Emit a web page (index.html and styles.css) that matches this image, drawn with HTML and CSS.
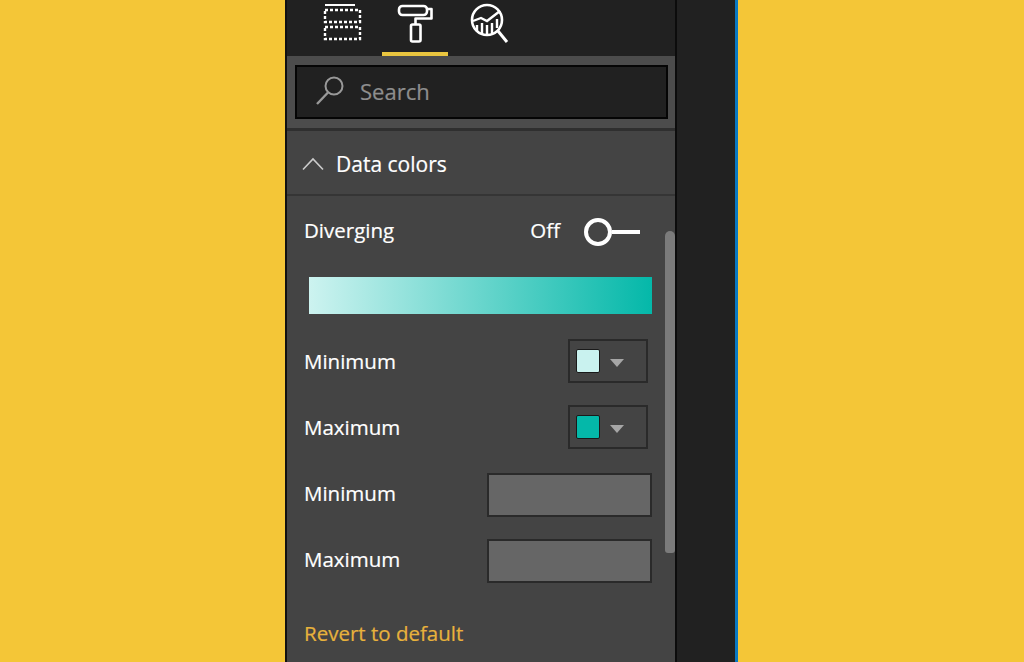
FILE: index.html
```html
<!DOCTYPE html>
<html lang="en">
<head>
<meta charset="utf-8">
<title>Data colors</title>
<link rel="stylesheet" href="styles.css">
</head>
<body>
<div class="pane">
  <div class="panel">
    <div class="tabs">
      <div class="tab tab-fields">
        <svg width="40" height="44" viewBox="0 0 40 44" fill="none" stroke="#fff">
          <path d="M2 7h30" stroke-width="2"/>
          <rect x="2" y="12" width="35" height="12" stroke-width="2.400" stroke-dasharray="3 2"/>
          <rect x="2" y="29" width="35" height="12" stroke-width="2.400" stroke-dasharray="3 2"/>
        </svg>
      </div>
      <div class="tab tab-format">
        <svg width="36" height="46" viewBox="0 0 36 46" fill="none" stroke="#fff" stroke-width="2.600" stroke-linejoin="round">
          <rect x="2" y="8" width="28" height="9" rx="3.500"/>
          <path d="M30 11h4.500v9.500H18.500v6"/>
          <rect x="14" y="26.500" width="9.500" height="17" rx="1.500"/>
        </svg>
      </div>
      <div class="tab tab-analytics">
        <svg width="40" height="46" viewBox="0 0 40 46" fill="none" stroke="#fff">
          <circle cx="17" cy="22" r="15" stroke-width="2.600"/>
          <path d="M28 33l9 11" stroke-width="3"/>
          <path d="M3 23l8-3 6 3 13-10" stroke-width="2.400"/>
          <path d="M7 27v6M12 25v11M17 27v9M22 25v10M27 21v9" stroke-width="2.400"/>
        </svg>
      </div>
    </div>
    <div class="search-band">
      <div class="search">
        <svg class="search-icon" width="30" height="32" viewBox="0 0 30 32" fill="none" stroke="#999">
          <circle cx="19" cy="11" r="8.500" stroke-width="2"/>
          <path d="M13 17.500L2 29" stroke-width="2.400"/>
        </svg>
        <span class="search-text">Search</span>
      </div>
    </div>
    <div class="card-head">
      <svg class="chevron" width="22" height="14" viewBox="0 0 22 14" fill="none" stroke="#ccc" stroke-width="1.600">
        <path d="M1 12.500L11 2l10 10.500"/>
      </svg>
      <span class="card-title">Data colors</span>
    </div>
    <div class="card-body">
      <div class="row row-toggle">
        <span class="label">Diverging</span>
        <div class="toggle">
          <span class="label">Off</span>
          <span class="switch"><span class="knob"></span><span class="stem"></span></span>
        </div>
      </div>
      <div class="gradient"></div>
      <div class="row row-color">
        <span class="label">Minimum</span>
        <div class="picker"><span class="swatch swatch-min"></span><span class="caret"></span></div>
      </div>
      <div class="row row-color">
        <span class="label">Maximum</span>
        <div class="picker"><span class="swatch swatch-max"></span><span class="caret"></span></div>
      </div>
      <div class="row row-input">
        <span class="label">Minimum</span>
        <div class="field"></div>
      </div>
      <div class="row row-input">
        <span class="label">Maximum</span>
        <div class="field"></div>
      </div>
      <div class="revert">Revert to default</div>
    </div>
    <div class="scrollbar"></div>
  </div>
  <div class="strip"></div>
</div>
</body>
</html>
```

FILE: styles.css
```css
* { box-sizing: border-box; }
html, body { margin: 0; height: 100%; overflow: hidden; }
body {
  background: #f4c637;
  font-family: "Open Sans", "Noto Sans", sans-serif;
  color: #fff;
  padding-left: 285px;
  -webkit-text-stroke: 0.2px currentColor;
}
.pane {
  display: flex;
  width: 453px;
  height: 662px;
}
.panel {
  position: relative;
  width: 392px;
  background: #444;
  border-left: 2px solid #111;
  border-right: 2px solid #0c0c0c;
  overflow: hidden;
}
.strip {
  width: 61px;
  background: #212121;
  border-right: 3px solid #0a78c2;
}
.tabs {
  display: flex;
  height: 56px;
  background: #212121;
  padding-left: 29px;
}
.tab {
  display: flex;
  align-items: flex-start;
  height: 56px;
  margin-top: -2px;
}
.tab-fields { width: 66px; padding-left: 7px; }
.tab-format {
  width: 66px;
  padding-left: 15px;
  height: 58px;
  border-bottom: 4px solid #e9c53f;
}
.tab-analytics { padding-left: 22px; }
.search-band {
  height: 75px;
  padding: 9px 8px 0;
  background: #4c4c4c;
  border-bottom: 3px solid #2f2f2f;
}
.search {
  display: flex;
  align-items: center;
  width: 373px;
  height: 54px;
  background: #212121;
  border: 2px solid #050505;
  padding-left: 18px;
}
.search-icon { margin-top: -2px; }
.search-text {
  margin-left: 15px;
  margin-top: -2px;
  font-size: 22px;
  color: #8e8e8e;
}
.card-head {
  display: flex;
  align-items: center;
  height: 65px;
  padding: 2px 0 0 15px;
  border-bottom: 2px solid #353535;
}
.card-title {
  margin-left: 12px;
  font-size: 21px;
}
.card-body {
  padding: 0 23px 0 17px;
  position: relative;
}
.label { font-size: 20.500px; white-space: nowrap; }
.row {
  display: flex;
  align-items: center;
  justify-content: space-between;
}
.row-toggle { height: 69px; padding-right: 12px; }
.row-toggle .label { margin-top: -2px; }
.toggle { display: flex; align-items: center; }
.switch {
  display: flex;
  align-items: center;
  margin-top: 2px;
  margin-left: 24px;
}
.knob {
  width: 28px;
  height: 28px;
  border: 4px solid #fff;
  border-radius: 50%;
}
.stem {
  width: 28px;
  height: 4px;
  background: #fff;
}
.gradient {
  width: 343px;
  height: 37px;
  margin: 12px 0 0 5px;
  background: linear-gradient(90deg, #cdf3f0, #04b8a9);
}
.row-color {
  height: 44px;
  margin-top: 25px;
  padding-right: 4px;
}
.row-color + .row-color { margin-top: 22px; }
.picker {
  display: flex;
  align-items: center;
  width: 80px;
  height: 44px;
  border: 2px solid #2a2a2a;
  padding-left: 7px;
}
.swatch {
  width: 24px;
  height: 24px;
  margin-left: -1px;
  border: 1px solid #1a1a1a;
  border-radius: 2px;
}
.swatch-min { background: #c9f2ef; }
.swatch-max { background: #04b8a9; }
.caret {
  margin-left: 10px;
  margin-top: 4px;
  border-left: 7px solid transparent;
  border-right: 7px solid transparent;
  border-top: 8px solid #a6a6a6;
}
.row-input { height: 44px; margin-top: 24px; }
.row-input + .row-input { margin-top: 22px; }
.row-input .label { margin-top: -4px; }
.field {
  width: 165px;
  height: 44px;
  background: #666;
  border: 2px solid #2a2a2a;
}
.revert {
  margin-top: 36px;
  font-size: 20.500px;
  color: #e8b23c;
}
.scrollbar {
  position: absolute;
  top: 231px;
  right: 0;
  width: 10px;
  height: 322px;
  background: #7b7b7b;
  border-radius: 5px 5px 3px 3px;
}
```
